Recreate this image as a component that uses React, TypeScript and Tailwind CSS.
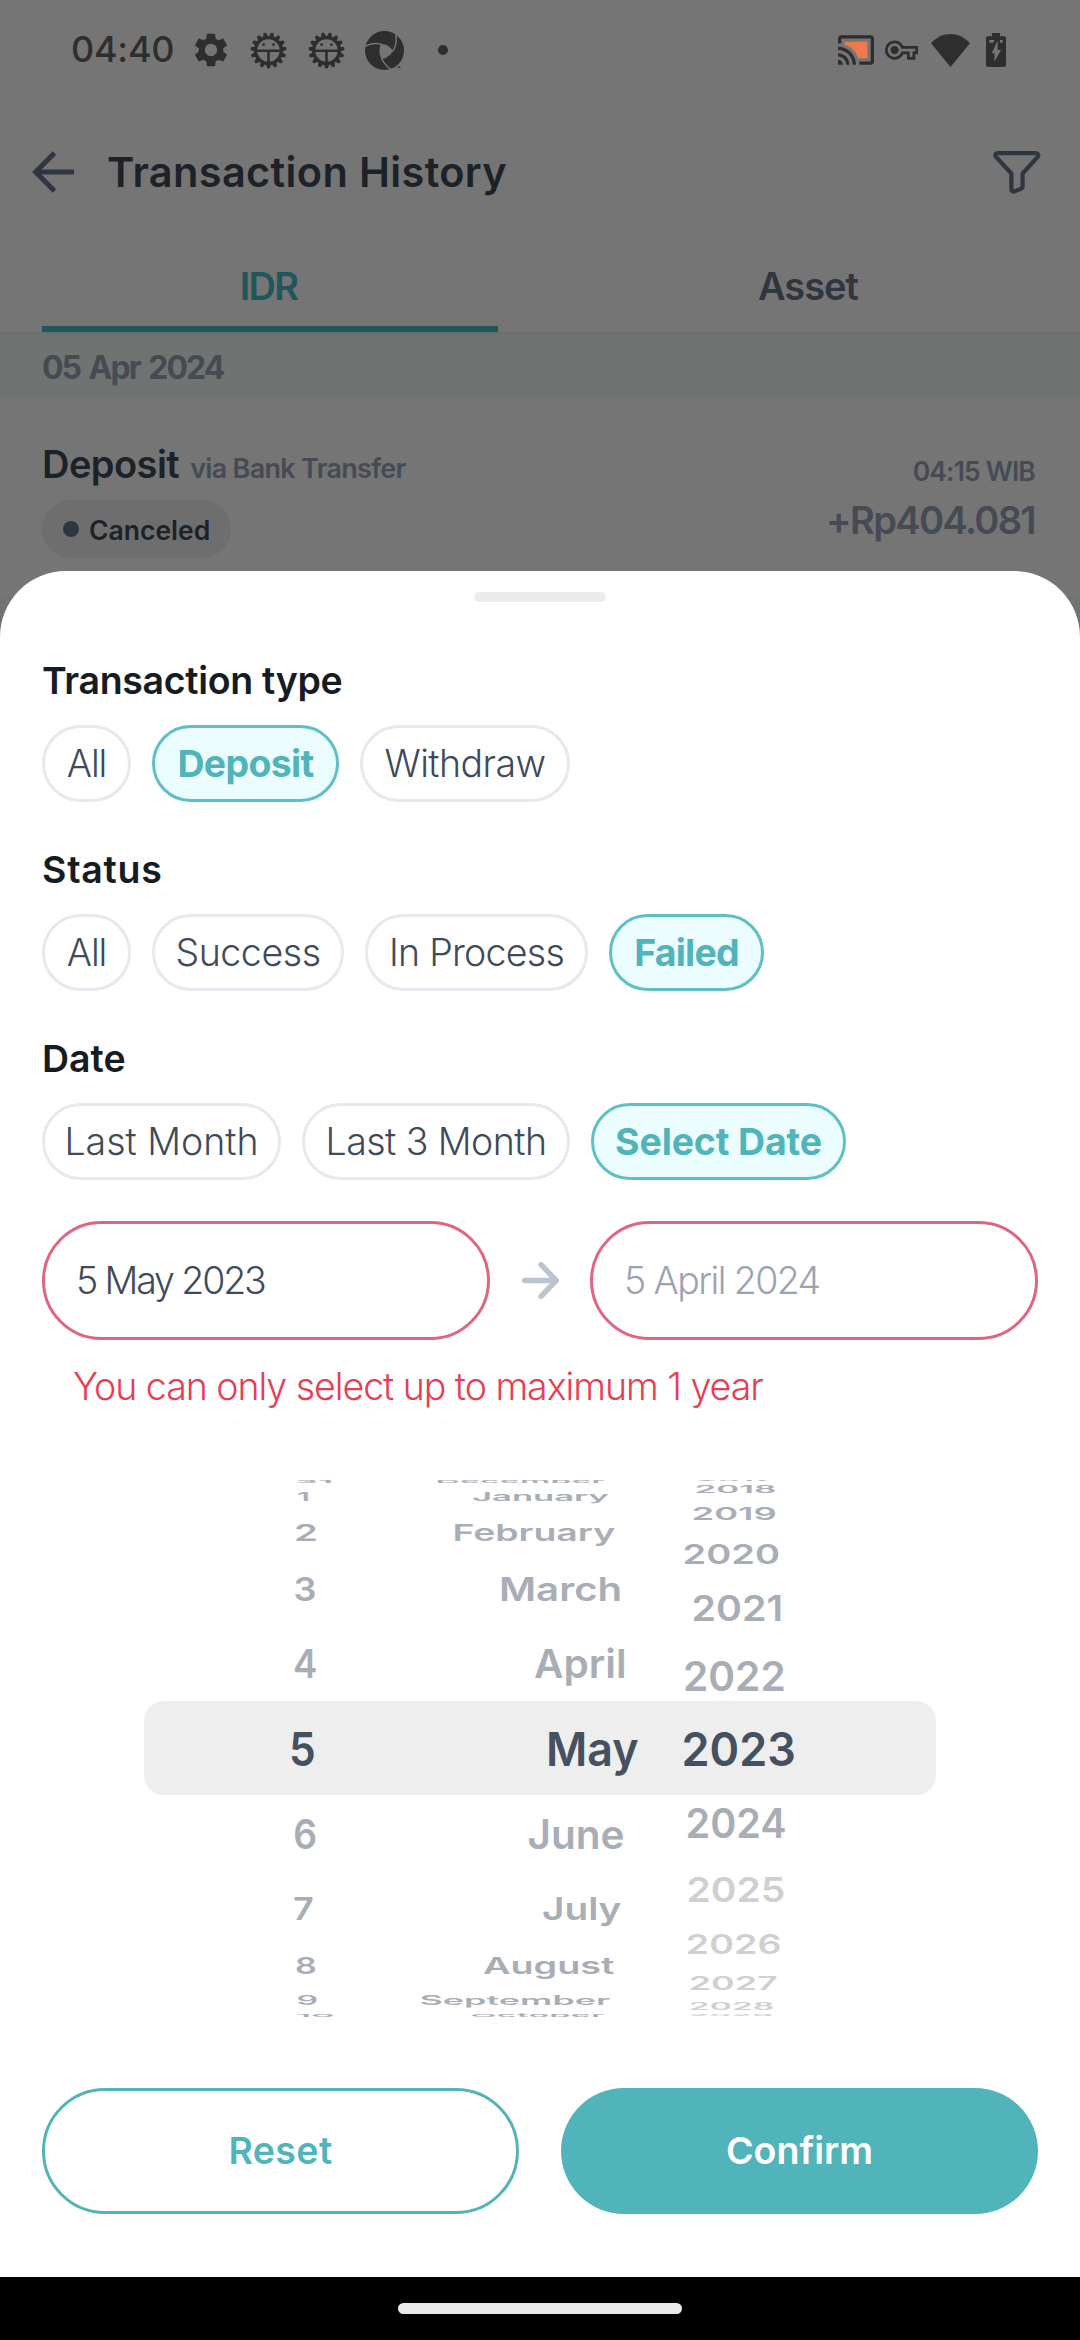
import type { ReactNode } from "react";

const RAYS = Array.from({ length: 15 }, (_, i) => i * 24);

function GearIcon() {
  return (
    <svg className="h-[34px] w-[32px] shrink-0" viewBox="2.6 2.3 18.8 19.4" fill="#2e2e2e">
      <path d="M19.14,12.94c0.04-0.3,0.06-0.61,0.06-0.94c0-0.32-0.02-0.64-0.07-0.94l2.03-1.58c0.18-0.14,0.23-0.41,0.12-0.61l-1.92-3.32c-0.12-0.22-0.37-0.29-0.59-0.22l-2.39,0.96c-0.5-0.38-1.03-0.7-1.62-0.94L14.4,2.81c-0.04-0.24-0.24-0.41-0.48-0.41h-3.84c-0.24,0-0.43,0.17-0.47,0.41L9.25,5.35C8.66,5.59,8.12,5.92,7.63,6.29L5.24,5.33c-0.22-0.08-0.47,0-0.59,0.22L2.74,8.87C2.62,9.08,2.66,9.34,2.86,9.48l2.03,1.58C4.84,11.36,4.8,11.69,4.8,12s0.02,0.64,0.07,0.94l-2.03,1.58c-0.18,0.14-0.23,0.41-0.12,0.61l1.92,3.32c0.12,0.22,0.37,0.29,0.59,0.22l2.39-0.96c0.5,0.38,1.03,0.7,1.62,0.94l0.36,2.54c0.05,0.24,0.24,0.41,0.48,0.41h3.84c0.24,0,0.44-0.17,0.47-0.41l0.36-2.54c0.59-0.24,1.13-0.56,1.62-0.94l2.39,0.96c0.22,0.08,0.47,0,0.59-0.22l1.92-3.32c0.12-0.22,0.07-0.47-0.12-0.61L19.14,12.94z M12,15.6c-1.98,0-3.6-1.62-3.6-3.6s1.62-3.6,3.6-3.6s3.6,1.62,3.6,3.6S13.98,15.6,12,15.6z" />
    </svg>
  );
}

function BugIcon() {
  return (
    <svg className="size-[37px] shrink-0" viewBox="0 0 37 37" fill="none" stroke="#2e2e2e">
      <circle cx="18.5" cy="18.5" r="12.8" strokeWidth="3.2" />
      {RAYS.map((a) => (
        <path
          key={a}
          d="M16.4 32.2L17.6 36h1.8L20.6 32.2z"
          fill="#2e2e2e"
          strokeWidth="1"
          strokeLinejoin="round"
          transform={`rotate(${a} 18.5 18.5)`}
        />
      ))}
      <path d="M6 18.8h25M18.5 18.8v12.5" strokeWidth="2.6" />
      <circle cx="13.6" cy="12.6" r="1.4" fill="#2e2e2e" stroke="none" />
      <circle cx="23.4" cy="12.6" r="1.4" fill="#2e2e2e" stroke="none" />
    </svg>
  );
}

function ShutterIcon() {
  return (
    <svg className="size-[39px] shrink-0" viewBox="0 0 39 39">
      <circle cx="19.5" cy="19.5" r="19.5" fill="#2e2e2e" />
      <path d="M15.8 13.2C20 12.6 25.2 15.5 28 20.2C25 24.5 21 27.5 16.8 28.2C14 24 13.8 17.5 15.8 13.2z" fill="#757575" />
      <path
        d="M-.5 15.8C4.5 12.5 10.5 11.8 16.5 13.3M27.6 20.4C31 15.5 32 10 30.7 3M16.5 27.5C19 32.5 22 36 27.5 39.5"
        fill="none"
        stroke="#757575"
        strokeWidth="1.5"
      />
      <path d="M25.5 37.5C29.5 38 32.5 37 35.5 34.5L37 39L27 40z" fill="#757575" />
      <path d="M33 36.2h2.4" stroke="#2e2e2e" strokeWidth="1.3" />
    </svg>
  );
}

function CastIcon() {
  return (
    <svg className="h-[30px] w-[36px] shrink-0" viewBox="1 3 22 18" fill="#2e2e2e">
      <path d="M19 7H5v1.63c3.96 1.28 7.09 4.41 8.37 8.37H19V7z" fill="#f0784e" />
      <path d="M1 18v3h3c0-1.66-1.34-3-3-3zm0-4v2c2.76 0 5 2.24 5 5h2c0-3.87-3.13-7-7-7zM1 10v2c4.97 0 9 4.03 9 9h2c0-6.08-4.93-11-11-11zm20-7H3c-1.1 0-2 .9-2 2v3h2V5h18v14h-7v2h7c1.1 0 2-.9 2-2V5c0-1.1-.9-2-2-2z" />
    </svg>
  );
}

function KeyIcon() {
  return (
    <svg className="h-[20px] w-[33px] shrink-0" viewBox="0 5 24 14" fill="#2e2e2e">
      <path d="M22 19h-6v-4h-2.68c-1.14 2.42-3.6 4-6.32 4-3.86 0-7-3.14-7-7s3.14-7 7-7c2.72 0 5.17 1.58 6.32 4H24v6h-2v4zm-4-2h2v-4h2v-2H11.94l-.23-.67C11.01 8.34 9.11 7 7 7c-2.76 0-5 2.24-5 5s2.24 5 5 5c2.11 0 4.01-1.34 4.71-3.33l.23-.67H18v4zM7 15c-1.65 0-3-1.35-3-3s1.35-3 3-3 3 1.35 3 3-1.35 3-3 3z" />
      <circle cx="7" cy="12" r="2" />
    </svg>
  );
}

function WifiIcon() {
  return (
    <svg className="h-[33px] w-[39px] shrink-0" viewBox="0 0 39 33" fill="#2e2e2e">
      <path d="M19.5 33L0 9.3C11-3.1 28-3.1 39 9.3z" />
    </svg>
  );
}

function BatteryIcon() {
  return (
    <svg className="h-[34px] w-[20px] shrink-0" viewBox="0 0 20 34">
      <path d="M6 0h8v3.3h4a2 2 0 012 2V32a2 2 0 01-2 2H2a2 2 0 01-2-2V5.300a2 2 0 012-2h4z" fill="#2e2e2e" />
      <path d="M3.300 6.900h5.400L7 9.700H3.300zM14 6.900h2.800v2.800H14zM11.600 7.500v9.500h3.400L8.500 28.500V20.300H5.800z" fill="#757575" />
    </svg>
  );
}

function BackIcon() {
  return (
    <svg className="h-[42px] w-[42px] shrink-0" viewBox="0 0 42 42" fill="none" stroke="#30363f" strokeWidth="5">
      <path d="M42 21H4M22.500 2L3.600 21L22.500 40" />
    </svg>
  );
}

function FilterIcon() {
  return (
    <svg className="h-[43px] w-[48px] shrink-0" viewBox="0 0 48 43" fill="none" stroke="#30363f" strokeWidth="4.2" strokeLinejoin="round">
      <path d="M4.500 2.200h38.500c2.300 0 3 2.200 1.700 3.700L29.600 22.500v13c0 1-.5 1.800-1.400 2.100l-7 2.900c-1.400.5-2.800-.3-2.800-2V22.500L3 5.900C1.600 4.400 2.300 2.200 4.500 2.200z" />
    </svg>
  );
}

function RightArrowIcon() {
  return (
    <svg className="h-[37px] w-[37px] shrink-0" viewBox="0 0 37 37" fill="none" stroke="#bcc4cf" strokeWidth="5.4" strokeLinecap="round" strokeLinejoin="round">
      <path d="M2.700 18.500H34M19 2.700L34.300 18.500L19 34.300" />
    </svg>
  );
}

function Chip({ on, className, children }: { on?: boolean; className: string; children: ReactNode }) {
  const tone = on
    ? "border-[#5ec0c7] bg-[#ebfdff] font-bold text-[#52b4bb]"
    : "border-[#e8e9ee] bg-white font-light text-[#3f4a5b]";
  return (
    <button className={`flex h-[77px] items-center justify-center rounded-full border-3 pt-[2px] text-[37.5px] whitespace-nowrap ${tone} ${className}`}>
      {children}
    </button>
  );
}

function Heading({ className, children }: { className: string; children: ReactNode }) {
  return <h2 className={`mb-[22px] text-[37.5px] leading-[45px] font-semibold text-[#171b22] ${className}`}>{children}</h2>;
}

type WheelItem = { label: string; height: number; x: number; sx: number; sy: number; tone?: "active" | "disabled" };

const DAYS: WheelItem[] = [
  { label: "31", height: 4, x: 151, sx: 0.768, sy: 0.08 },
  { label: "1", height: 25, x: 153, sx: 0.65, sy: 0.26 },
  { label: "2", height: 48, x: 150, sx: 0.814, sy: 0.48 },
  { label: "3", height: 65, x: 149.5, sx: 0.769, sy: 0.68 },
  { label: "4", height: 84.5, x: 149, sx: 0.778, sy: 0.85 },
  { label: "5", height: 85.5, x: 145, sx: 0.904, sy: 1, tone: "active" },
  { label: "6", height: 83, x: 149.3, sx: 0.791, sy: 0.86 },
  { label: "7", height: 67, x: 149, sx: 0.769, sy: 0.67 },
  { label: "8", height: 47, x: 151, sx: 0.723, sy: 0.48 },
  { label: "9", height: 23, x: 152.5, sx: 0.723, sy: 0.27 },
  { label: "10", height: 8, x: 152, sx: 0.76, sy: 0.08 },
];

const MONTHS: WheelItem[] = [
  { label: "December", height: 4, x: 64.6, sx: 0.721, sy: 0.08 },
  { label: "January", height: 25, x: 101, sx: 0.736, sy: 0.26 },
  { label: "February", height: 48, x: 81.4, sx: 0.795, sy: 0.48 },
  { label: "March", height: 65, x: 128, sx: 0.855, sy: 0.68 },
  { label: "April", height: 84.5, x: 163, sx: 0.863, sy: 0.85 },
  { label: "May", height: 85.5, x: 175, sx: 0.953, sy: 1, tone: "active" },
  { label: "June", height: 83, x: 156.5, sx: 0.862, sy: 0.86 },
  { label: "July", height: 67, x: 171, sx: 0.824, sy: 0.67 },
  { label: "August", height: 47, x: 112, sx: 0.803, sy: 0.48 },
  { label: "September", height: 23, x: 48.5, sx: 0.764, sy: 0.27 },
  { label: "October", height: 8, x: 99.5, sx: 0.728, sy: 0.08 },
];

const YEARS: WheelItem[] = [
  { label: "2017", height: 1, x: 37.7, sx: 0.714, sy: 0.04 },
  { label: "2018", height: 18, x: 35.6, sx: 0.741, sy: 0.21 },
  { label: "2019", height: 30, x: 32.5, sx: 0.773, sy: 0.38 },
  { label: "2020", height: 49, x: 23.6, sx: 0.809, sy: 0.58 },
  { label: "2021", height: 61, x: 32.5, sx: 0.837, sy: 0.74 },
  { label: "2022", height: 73, x: 24, sx: 0.864, sy: 0.87 },
  { label: "2023", height: 74.5, x: 22.5, sx: 0.957, sy: 1, tone: "active" },
  { label: "2024", height: 73, x: 26.5, sx: 0.841, sy: 0.86 },
  { label: "2025", height: 60, x: 27.5, sx: 0.83, sy: 0.73, tone: "disabled" },
  { label: "2026", height: 49, x: 26.7, sx: 0.801, sy: 0.58, tone: "disabled" },
  { label: "2027", height: 31, x: 29.8, sx: 0.762, sy: 0.39, tone: "disabled" },
  { label: "2028", height: 15.5, x: 29.8, sx: 0.715, sy: 0.21, tone: "disabled" },
  { label: "2029", height: 2, x: 29.8, sx: 0.706, sy: 0.04, tone: "disabled" },
];

function Wheel({ items, className }: { items: WheelItem[]; className: string }) {
  return (
    <div className={`relative flex h-[537px] flex-col overflow-hidden ${className}`}>
      {items.map((it) => (
        <div key={it.label} className="flex shrink-0 items-center" style={{ height: it.height }}>
          <span
            className={`origin-left text-[47px] leading-none font-semibold whitespace-nowrap ${
              it.tone === "active" ? "text-[#465160]" : it.tone === "disabled" ? "text-[#d0d0d0]" : "text-[#a9aeb6]"
            }`}
            style={{ transform: `translateX(${it.x}px) scale(${it.sx}, ${it.sy})` }}
          >
            {it.label}
          </span>
        </div>
      ))}
    </div>
  );
}

export default function App() {
  return (
    <div className="relative h-[2340px] w-[1080px] overflow-hidden bg-[#757575] font-[Inter,sans-serif]">
      <div className="flex h-[100px] items-center pr-[74px] pl-[71px]">
        <div className="w-[124px] pb-[2px] text-[36px] leading-none font-medium tracking-[-0.28px] text-[#2e2e2e]">04:40</div>
        <GearIcon />
        <div className="mr-[20px] ml-[23px] flex gap-[21px]">
          <BugIcon />
          <BugIcon />
        </div>
        <ShutterIcon />
        <div className="ml-[34px] size-[10px] rounded-full bg-[#2e2e2e]" />
        <div className="ml-auto flex items-center">
          <CastIcon />
          <div className="w-[11px]" />
          <KeyIcon />
          <div className="w-[13px]" />
          <WifiIcon />
          <div className="w-[16px]" />
          <BatteryIcon />
        </div>
      </div>

      <header className="flex h-[144px] items-center pr-[39px] pl-[32px]">
        <BackIcon />
        <h1 className="ml-[33px] text-[41.5px] font-semibold tracking-[0.35px] text-[#1d2228]">Transaction History</h1>
        <div className="ml-auto">
          <FilterIcon />
        </div>
      </header>

      <nav className="flex h-[90px] justify-between border-b-2 border-[#6b6e6e] px-[42px] text-[38px] font-semibold">
        <div className="flex w-[456px] items-center justify-center border-b-[6px] border-[#20575a] pt-[3px] pr-[3px] tracking-[-1.7px] text-[#20575a]">IDR</div>
        <div className="flex w-[456px] items-center justify-center border-b-[6px] border-transparent pt-[3px] pr-[4px] tracking-[-1px] text-[#30353e]">Asset</div>
      </nav>

      <div className="flex h-[63px] items-center bg-[#6f7371] px-[42px] pt-[4px] text-[32px] font-bold tracking-[-2px] [word-spacing:3px] text-[#454a53]">
        05 Apr 2024
      </div>

      <div className="flex h-[200px] justify-between px-[42px]">
        <div className="pt-[44px]">
          <div className="flex items-baseline">
            <span className="text-[38px] leading-[46px] font-semibold tracking-[-0.55px] text-[#1d2228]">Deposit</span>
            <span className="ml-[11px] text-[27px] leading-[46px] font-semibold tracking-[-0.7px] text-[#454a53]">via Bank Transfer</span>
          </div>
          <div className="mt-[8px] flex h-[58px] w-[189px] items-center rounded-full bg-[#6e6e6e] pl-[21px]">
            <span className="size-[16px] rounded-full bg-[#30363f]" />
            <span className="ml-[10px] pt-[3px] text-[26.5px] font-semibold text-[#1d2228]">Canceled</span>
          </div>
        </div>
        <div className="flex flex-col items-end pt-[54px] pr-[3px] text-[#454a53]">
          <span className="text-[26.5px] leading-[40px] font-semibold tracking-[-0.85px]">04:15 WIB</span>
          <span className="mt-[9px] text-[38px] leading-[40px] font-semibold tracking-[-1.61px]">+Rp404.081</span>
        </div>
      </div>
      <div className="h-[80px] bg-[#6f7371]" />

      <section className="absolute inset-x-0 top-[570.5px] bottom-[63px] rounded-t-[66px] bg-white px-[42px]">
        <div className="mx-auto mt-[21px] h-[10px] w-[132px] rounded-full bg-[#ececec]" />

        <Heading className="mt-[56px] tracking-[-0.33px]">Transaction type</Heading>
        <div className="flex gap-[21px]">
          <Chip className="w-[89px] tracking-[-1.1px]">All</Chip>
          <Chip on className="w-[187px] tracking-[-0.69px]">Deposit</Chip>
          <Chip className="w-[210px] tracking-[-0.56px]">Withdraw</Chip>
        </div>

        <Heading className="mt-[45px] tracking-[0.75px]">Status</Heading>
        <div className="flex gap-[21px]">
          <Chip className="w-[89px] tracking-[-1.1px]">All</Chip>
          <Chip className="w-[192px] tracking-[-0.43px]">Success</Chip>
          <Chip className="w-[223px] tracking-[-0.73px]">In Process</Chip>
          <Chip on className="w-[155px] tracking-[-0.82px]">Failed</Chip>
        </div>

        <Heading className="mt-[45px]">Date</Heading>
        <div className="flex gap-[21px]">
          <Chip className="w-[239px]">Last Month</Chip>
          <Chip className="w-[268px] tracking-[-0.55px]">Last 3 Month</Chip>
          <Chip on className="w-[255px] tracking-[-0.17px]">Select Date</Chip>
        </div>

        <div className="mt-[41px] flex items-center justify-between text-[37.5px] font-light">
          <div className="flex h-[119px] w-[448px] items-center rounded-full border-3 border-[#e06582] pt-[2px] pl-[31px] tracking-[-2.12px] text-[#3f4a5b]">
            5 May 2023
          </div>
          <RightArrowIcon />
          <div className="flex h-[119px] w-[448px] items-center rounded-full border-3 border-[#e06582] pt-[2px] pl-[31px] tracking-[-1.6px] text-[#9ba3b2]">
            5 April 2024
          </div>
        </div>
        <p className="mt-[24px] ml-[31px] text-[37.5px] leading-[45px] font-light tracking-[-1.03px] text-[#ea3c53]">
          You can only select up to maximum 1 year
        </p>

        <div className="relative mt-[71px] ml-[102px] flex w-[792px]">
          <div className="absolute inset-x-0 top-[221px] h-[94px] rounded-[20px] bg-[#eeeeee]" />
          <Wheel items={DAYS} className="w-[227px]" />
          <Wheel items={MONTHS} className="w-[288px]" />
          <Wheel items={YEARS} className="w-[277px]" />
        </div>

        <div className="mt-[71px] grid grid-cols-2 gap-[42px] text-[37.5px] font-semibold">
          <button className="h-[126px] rounded-full border-3 border-[#52b4bb] pt-[2px] tracking-[0.4px] text-[#52b4bb]">Reset</button>
          <button className="h-[126px] rounded-full bg-[#52b4bb] pt-[2px] text-white">Confirm</button>
        </div>
      </section>

      <div className="absolute inset-x-0 bottom-0 flex h-[63px] items-start justify-center bg-black pt-[26px]">
        <div className="h-[11px] w-[284px] rounded-full bg-[#eaeaea]" />
      </div>
    </div>
  );
}
